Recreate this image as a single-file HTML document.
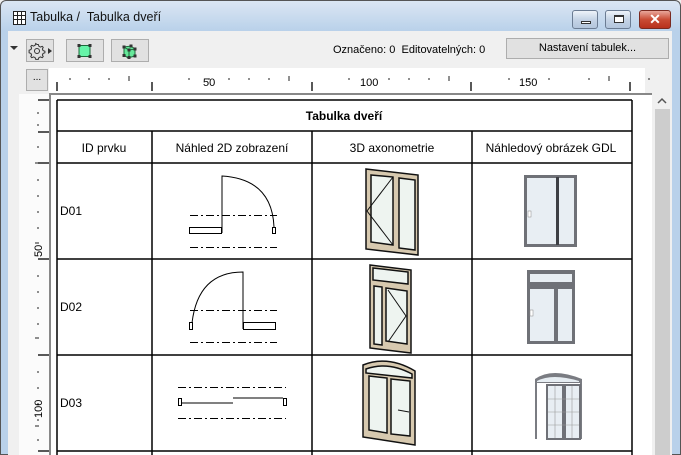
<!DOCTYPE html>
<html><head><meta charset="utf-8"><style>
*{margin:0;padding:0;box-sizing:border-box}
body{width:681px;height:455px;overflow:hidden;font-family:"Liberation Sans",sans-serif;font-size:11px;color:#000;background:#f0f0f0;position:relative}
.abs{position:absolute}
</style></head><body>
<div class="abs" style="left:0;top:0;width:681px;height:455px;background:linear-gradient(#dbe6f3,#b9d1ea 30px,#b9d1ea);border:1px solid #555;border-radius:6px 6px 0 0"></div>
<svg class="abs" style="left:12px;top:10px" width="16" height="16"><rect x="1.5" y="1.5" width="12" height="13" fill="#fff" stroke="#222"/><path d="M5.5 1.5v13M9.5 1.5v13M1.5 5.5h12M1.5 9.5h12" stroke="#222"/></svg>
<div class="abs" style="left:30px;top:10px;font-size:12.5px;color:#111">Tabulka /&nbsp; Tabulka dveří</div>
<div class="abs" style="left:572px;top:10px;width:26px;height:19px;border:1px solid #6b7c93;border-radius:3px;background:linear-gradient(#eef3f9,#c5d4e6 50%,#b3c5dc)"><div class="abs" style="left:8px;top:10px;width:10px;height:3px;border:1px solid #333;background:#fff"></div></div>
<div class="abs" style="left:605px;top:10px;width:26px;height:19px;border:1px solid #6b7c93;border-radius:3px;background:linear-gradient(#eef3f9,#c5d4e6 50%,#b3c5dc)"><div class="abs" style="left:8px;top:4px;width:10px;height:8px;border:1px solid #333;border-top-width:2px;background:#fff"></div></div>
<div class="abs" style="left:639px;top:10px;width:32px;height:19px;border:1px solid #7a2a20;border-radius:3px;background:linear-gradient(#e8a79b,#c94c35 50%,#b8311c);color:#fff;font-weight:bold;font-size:14px;text-align:center;line-height:17px">✕</div>
<div class="abs" style="left:8px;top:31px;width:664px;height:424px;background:#f0f0f0"></div>
<div class="abs" style="left:10px;top:46px;width:0;height:0;border-left:4px solid transparent;border-right:4px solid transparent;border-top:4px solid #333"></div>
<div class="abs" style="left:26px;top:39px;width:28px;height:23px;border:1px solid #adadad;background:#e1e1e1"></div>
<svg class="abs" style="left:28px;top:41px" width="26" height="20"><g fill="none" stroke="#333"><circle cx="9" cy="10" r="2.5"/><path d="M9 3.5l1.3 0 .6 1.8 1.6.8 1.7-.8 1 1-.8 1.7.7 1.6 1.8.6v1.6l-1.8.6-.7 1.6.8 1.7-1 1-1.7-.8-1.6.7-.6 1.8H7.7l-.6-1.8-1.6-.7-1.7.8-1-1 .8-1.7-.7-1.6-1.8-.6V9.2l1.8-.6.7-1.6-.8-1.7 1-1 1.7.8 1.6-.8.6-1.8z"/></g><path d="M20 7l4 3-4 3z" fill="#333"/></svg>
<div class="abs" style="left:66px;top:39px;width:38px;height:23px;border:1px solid #adadad;background:#e1e1e1"></div>
<svg class="abs" style="left:76px;top:43px" width="18" height="16"><rect x="3" y="2.5" width="11" height="11" fill="#66f4a8" stroke="#1a6b3a"/><g fill="#333"><rect x="1.5" y="1" width="3" height="3"/><rect x="12.5" y="1" width="3" height="3"/><rect x="1.5" y="12" width="3" height="3"/><rect x="12.5" y="12" width="3" height="3"/></g></svg>
<div class="abs" style="left:111px;top:39px;width:38px;height:23px;border:1px solid #adadad;background:#e1e1e1"></div>
<svg class="abs" style="left:121px;top:42px" width="18" height="18"><path d="M3 5l7-1 4 3v7l-7 2-4-3z" fill="#66e89a" stroke="#1a6b3a"/><path d="M3 5l5 3v8M8 8l6-1" stroke="#1a6b3a" fill="none"/><g fill="#333"><rect x="1.5" y="3.5" width="3" height="3"/><rect x="8.5" y="2.5" width="3" height="3"/><rect x="12.5" y="5.5" width="3" height="3"/><rect x="6.5" y="6.5" width="3" height="3"/><rect x="1.5" y="12" width="3" height="3"/><rect x="6.5" y="14" width="3" height="3"/><rect x="12.5" y="12.5" width="3" height="3"/></g></svg>
<div class="abs" style="left:333px;top:44px;font-size:11px">Označeno: 0&nbsp; Editovatelných: 0</div>
<div class="abs" style="left:506px;top:38px;width:163px;height:21px;border:1px solid #adadad;background:#e1e1e1;text-align:center;line-height:19px;font-size:11px">Nastavení tabulek...</div>
<div class="abs" style="left:19px;top:94px;width:31px;height:361px;background:#fbfbfb"></div>
<div class="abs" style="left:49px;top:68px;width:596px;height:29px;background:#fff"></div>
<div class="abs" style="left:26px;top:69px;width:22px;height:22px;border:1px solid #adadad;background:#e1e1e1;text-align:center;font-size:10px;line-height:16px">...</div>
<svg class="abs" style="left:0;top:0" width="681" height="455" font-family="Liberation Sans" font-size="11">
<g stroke="#222">
<path d="M57 82v9M152 82v9M312 82v9M471 82v9M630 82v9" stroke-width="1.5"/>
<path d="M70 78v2M89 78v2M109 78v2M129 78v2M189 78v2M209 78v2M229 78v2M249 78v2M269 78v2M289 78v2M349 78v2M389 78v2M409 78v2M429 78v2M449 78v2M509 78v2M529 78v2M549 78v2M589 78v2M609 78v2M649 78v2"/>
<path d="M129 76v5M289 76v5M449 76v5M609 76v5"/>
<path d="M38 100h11M38 132h11M38 163h11M38 259h11M38 355h11M38 451h11" stroke-width="1.5"/>
<path d="M35 163h4M35 243h4M35 338h4M35 426h4"/>
<path d="M37 113h2M37 125h2M37 147h2M37 180h2M37 196h2M37 212h2M37 228h2M37 276h2M37 292h2M37 308h2M37 324h2M37 372h2M37 388h2M37 404h2M37 420h2M37 440h2"/>
</g>
<text x="203" y="86">50</text><text x="360" y="86">100</text><text x="519" y="86">150</text>
<text transform="translate(42,257) rotate(-90)">50</text>
<text transform="translate(42,418) rotate(-90)">100</text>
</svg>
<div class="abs" style="left:49px;top:93px;width:603px;height:362px;background:#fff;border-left:2px solid #888;border-top:2px solid #888"></div>
<div class="abs" style="left:652px;top:93px;width:20px;height:362px;background:#f0f0f0"></div>
<div class="abs" style="left:655px;top:109px;width:15px;height:346px;background:#cdcdcd"></div>
<svg class="abs" style="left:656px;top:96px" width="12" height="10"><path d="M2 7l4-4 4 4" fill="none" stroke="#555" stroke-width="1.5"/></svg>
<svg class="abs" style="left:0;top:0" width="681" height="455" font-family="Liberation Sans" font-size="12">
<g stroke="#000" stroke-width="1.5" fill="none">
<path d="M57 100V455M632 100V455M57 100H632M57 131H632M57 163H632M57 259H632M57 355H632M57 451H632M152 131V455M312 131V455M472 131V455"/>
</g>
<text x="344" y="120" font-weight="bold" text-anchor="middle">Tabulka dveří</text>
<text x="104" y="152" text-anchor="middle">ID prvku</text>
<text x="232" y="152" text-anchor="middle">Náhled 2D zobrazení</text>
<text x="392" y="152" text-anchor="middle">3D axonometrie</text>
<text x="551" y="152" text-anchor="middle">Náhledový obrázek GDL</text>
<text x="60" y="215">D01</text><text x="60" y="311">D02</text><text x="60" y="407">D03</text>
<g stroke="#000" fill="none" stroke-width="1">
<path d="M190 215.5h87M190 247.5h87" stroke-dasharray="8,3,2,3"/>
<rect x="189.5" y="227.5" width="32" height="6"/><rect x="272.5" y="227.5" width="3" height="6"/>
<path d="M222 233V176q50 3 52 51"/>
<path d="M190 310.5h87M190 342.5h87" stroke-dasharray="8,3,2,3"/>
<rect x="189.5" y="322.5" width="3" height="7"/><rect x="243.5" y="322.5" width="32" height="7"/>
<path d="M243 329V272q-45 0-51 51"/>
<path d="M178 387.5h108M178 418.5h108" stroke-dasharray="8,3,2,3"/>
<rect x="178.5" y="398.5" width="3" height="7"/><rect x="283.5" y="398.5" width="3" height="7"/>
<path d="M182 403h51M233 398h50"/>
</g>
<g stroke="#111" stroke-width="1.5">
<path d="M366 169l52 6v80l-52-6z" fill="#d7c9af"/>
<path d="M371 175l22 2v68l-22-3zM399 178l16 2v70l-16-2z" fill="#eef4f0"/>
<path d="M393 177l-26 34 26 34" fill="none" stroke-width="1"/>
<path d="M370 265l41 5v83l-41-5z" fill="#d7c9af"/>
<path d="M373 268l35 4v12l-35-4zM374 286l8 1v58l-8-1zM386 288l21 3v53l-21-3z" fill="#eef4f0"/>
<path d="M388 290l18 26-18 26" fill="none" stroke-width="1"/>
<path d="M363 365q25-10 52 6v74l-52-8z" fill="#d7c9af"/>
<path d="M366 369q22-8 46 5l0 4-46-5z" fill="#eef4f0"/>
<path d="M369 376l18 2v55l-18-3zM391 379l19 2v55l-19-2z" fill="#eef4f0"/>
<path d="M398 410l11 2" stroke-width="1"/>
</g>
<g>
<rect x="524" y="175" width="53" height="72" fill="#6f7177"/>
<rect x="527" y="178" width="30" height="66" fill="#e8eef3"/><rect x="559" y="178" width="15" height="66" fill="#e8eef3"/>
<rect x="556" y="177" width="3" height="68" fill="#3d3f44"/>
<rect x="528" y="211" width="3" height="6" fill="#fff" stroke="#888" stroke-width=".5"/>
<rect x="527" y="270" width="48" height="74" fill="#6f7177"/>
<rect x="530" y="274" width="42" height="8" fill="#e8eef3"/>
<rect x="530" y="289" width="24" height="52" fill="#e8eef3"/><rect x="558" y="289" width="14" height="52" fill="#e8eef3"/>
<rect x="530" y="310" width="3" height="6" fill="#fff" stroke="#888" stroke-width=".5"/>
<path d="M535 379q17-12 47 0v60h-2v-56h-43v56h-2z" fill="#7a7c82"/>
<path d="M537 381q15-8 42 0v1h-42z" fill="#e6edf2"/>
<rect x="546" y="384" width="35" height="56" fill="#6f7177"/>
<rect x="548" y="386" width="14" height="52" fill="#e8eef3"/><rect x="566" y="386" width="13" height="52" fill="#e8eef3"/>
<path d="M548 399h31M548 412h31M548 425h31M555 386v52M572 386v52" stroke="#999" stroke-width=".6"/>
</g>
</svg>
</body></html>
